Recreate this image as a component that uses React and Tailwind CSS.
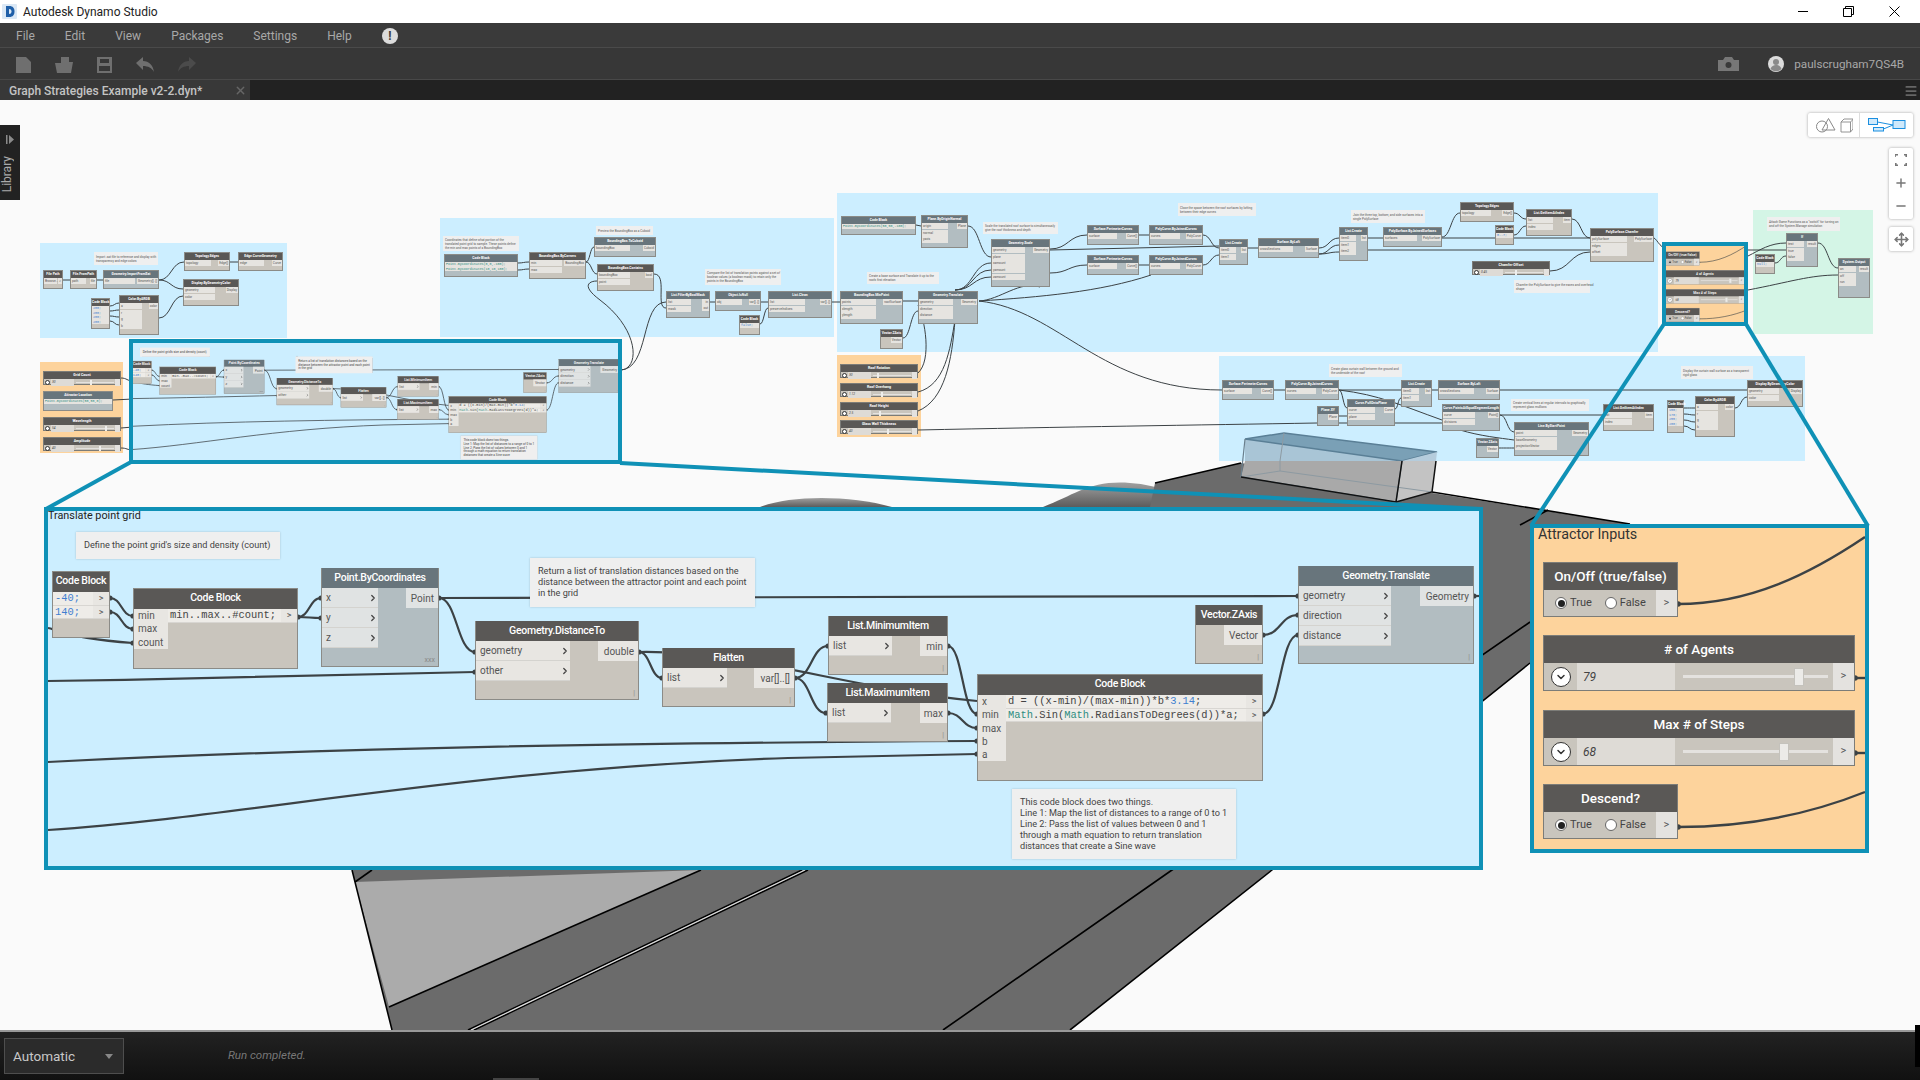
import { ChevronDown, ChevronRight, Menu, Minus, Move, Plus, X } from 'lucide-react';
import clsx from 'clsx';

// Helper for the wires: S curve between two ports
const s = (x1, y1, x2, y2) => {
  const mx = (x1 + x2) / 2;
  return `M${x1} ${y1}C${mx} ${y1} ${mx} ${y2} ${x2} ${y2}`;
};

const WIRE = '#3c4245';

// ---------- big node graph pieces ----------
const BigNode = ({ ox, oy, x, y, w, h, title, slate, lw, rw, inputs = [], outputs = [], foot = '|' }) => (
  <div
    className={clsx('absolute border border-[#8b8b87]', slate ? 'bg-[#b2bdc1]' : 'bg-[#c9c5bd]')}
    style={{ left: x - ox, top: y - oy, width: w, height: h }}
  >
    <div className={clsx('-mt-px flex h-5 items-center justify-center text-[10.5px] font-medium tracking-tight text-white whitespace-nowrap', slate ? 'bg-[#68757c]' : 'bg-[#5a5856]')}>
      {title}
    </div>
    <div className="flex justify-between">
      <div style={{ width: lw }}>
        {inputs.map((t) => (
          <div key={t} className={clsx('flex h-5 items-center justify-between border-b border-[#d4d3cf] pl-1 text-[10px] text-[#555]', slate ? 'bg-[#e0e3e3]' : 'bg-[#e8e6e2]')}>
            {t}
            <ChevronRight size={10} strokeWidth={3} className="text-[#444]" />
          </div>
        ))}
      </div>
      <div style={{ width: rw }}>
        {outputs.map((t) => (
          <div key={t} className={clsx('flex h-5 items-center justify-end pr-1 text-[10px] text-[#555]', slate ? 'bg-[#e0e3e3]' : 'bg-[#e8e6e2]')}>
            {t}
          </div>
        ))}
      </div>
    </div>
    <span className="absolute bottom-[1px] right-[3px] text-[7px] text-[#888]">{foot}</span>
  </div>
);

const CodeNode = ({ ox, oy, x, y, w, h, inputs = [], iw = 0, lines }) => (
  <div className="absolute border border-[#8b8b87] bg-[#c9c5bd]" style={{ left: x - ox, top: y - oy, width: w, height: h }}>
    <div className="flex h-5 items-center justify-center bg-[#5a5856] pb-[2px] text-[10.5px] font-medium tracking-tight text-white">Code Block</div>
    <div className="flex items-start">
      {iw > 0 && (
        <div className="bg-[#e8e6e2]" style={{ width: iw }}>
          {inputs.map((t) => (
            <div key={t} className="h-[13.3px] pl-1 text-[10px] leading-[13.3px] text-[#555]">{t}</div>
          ))}
        </div>
      )}
      <div className="min-w-0 flex-1">
        {lines.map((l, i) => (
          <div key={i} className="flex h-[13.5px] border-b border-[#d8d6d2]">
            <div className="flex-1 whitespace-pre bg-[#eeece8] pl-[2px] font-['Liberation_Mono',monospace] text-[10.4px] leading-[13px] text-[#444]">{l}</div>
            <div className="w-4 bg-[#e8e6e2] text-center text-[9px] leading-[12px] text-[#555]">&gt;</div>
          </div>
        ))}
      </div>
    </div>
  </div>
);

const BigNote = ({ ox, oy, x, y, w, h, lines }) => (
  <div
    className="absolute flex flex-col justify-center bg-[#efefef] px-2 text-[9.15px] leading-[11px] text-[#444] shadow-[0_0_2px_rgba(0,0,0,0.2)] whitespace-nowrap"
    style={{ left: x - ox, top: y - oy, width: w, height: h }}
  >
    {lines.map((l) => <div key={l}>{l}</div>)}
  </div>
);

const TRANSLATE_WIRES = [
  'M4 121C12 122 20 131 89 136',
  s(66, 91, 89, 109),
  s(66, 105, 89, 122),
  s(254, 110, 277, 91),
  s(254, 110, 277, 111),
  'M395 91L1254 89',
  s(395, 91, 431, 145),
  'M4 174C150 172 300 168 431 165',
  s(595, 145, 618, 171),
  'M595 145C700 143 810 183 933 194',
  s(751, 171, 784, 139),
  s(751, 171, 782, 206),
  s(904, 139, 933, 207),
  s(904, 206, 933, 221),
  'M4 255C300 240 600 236 933 234',
  'M4 323C200 310 420 262 744 251L933 247',
  s(1219, 207, 1254, 128),
  s(1219, 128, 1254, 108),
  'M1430 89L1439 89',
];

const TRANSLATE_DOTS = [
  [66, 91], [66, 105], [89, 109], [89, 122], [89, 136], [254, 110], [277, 91], [277, 111], [395, 91], [431, 145], [431, 165],
  [595, 145], [618, 171], [751, 171], [784, 139], [782, 206], [904, 139], [904, 206], [933, 207], [933, 221], [933, 234], [933, 247],
  [1219, 207], [1254, 128], [1219, 128], [1254, 108], [1254, 89], [1430, 89],
];

const Num = ({ children }) => <span className="text-[#3f7fd0]">{children}</span>;
const Cls = ({ children }) => <span className="text-[#2f8d80]">{children}</span>;

const TranslateGrid = ({ title }) => {
  const o = { ox: 44, oy: 507 };
  return (
    <div className="relative h-[363px] w-[1439px] bg-[#cceeff]">
      {title && <div className="absolute left-[4px] top-[2px] text-[10.8px] leading-[14px] text-[#222]">Translate point grid</div>}
      <svg className="absolute left-0 top-0" width="1439" height="363" fill="none" stroke={WIRE} strokeWidth="2.2">
        {TRANSLATE_WIRES.map((d) => <path key={d} d={d} />)}
        {TRANSLATE_DOTS.map(([x, y]) => <circle key={`${x}-${y}`} cx={x} cy={y} r="2.6" fill={WIRE} stroke="none" />)}
      </svg>
      <BigNote {...o} x={76} y={532} w={204} h={27} lines={["Define the point grid's size and density (count)"]} />
      <BigNote {...o} x={530} y={558} w={225} h={49} lines={['Return a list of translation distances based on the', 'distance between the attractor point and each point', 'in the grid']} />
      <CodeNode {...o} x={52} y={571} w={58} h={67} lines={[<Num>-40;</Num>, <Num>140;</Num>]} />
      <CodeNode {...o} x={133} y={588} w={165} h={81} iw={34} inputs={['min', 'max', 'count']} lines={['min..max..#count;']} />
      <BigNode {...o} slate x={321} y={568} w={118} h={99} title="Point.ByCoordinates" lw={56} rw={32} inputs={['x', 'y', 'z']} outputs={['Point']} foot="xxx" />
      <BigNode {...o} x={475} y={621} w={164} h={79} title="Geometry.DistanceTo" lw={94} rw={40} inputs={['geometry', 'other']} outputs={['double']} />
      <BigNode {...o} x={662} y={648} w={133} h={59} title="Flatten" lw={64} rw={40} inputs={['list']} outputs={['var[]..[]']} />
      <BigNode {...o} x={828} y={616} w={120} h={59} title="List.MinimumItem" lw={63} rw={27} inputs={['list']} outputs={['min']} />
      <BigNode {...o} x={827} y={683} w={121} h={59} title="List.MaximumItem" lw={63} rw={27} inputs={['list']} outputs={['max']} />
      <CodeNode
        {...o}
        x={977}
        y={674}
        w={286}
        h={107}
        iw={28}
        inputs={['x', 'min', 'max', 'b', 'a']}
        lines={[
          <>d = ((x-min)/(max-min))*b*<Num>3.14</Num>;</>,
          <><Cls>Math</Cls>.Sin(<Cls>Math</Cls>.RadiansToDegrees(d))*a;</>,
        ]}
      />
      <BigNote {...o} x={1012} y={789} w={224} h={70} lines={['This code block does two things.', 'Line 1: Map the list of distances to a range of 0 to 1', 'Line 2: Pass the list of values between 0 and 1', 'through a math equation to return translation', 'distances that create a Sine wave']} />
      <BigNode {...o} x={1195} y={605} w={68} h={59} title="Vector.ZAxis" lw={0} rw={38} outputs={['Vector']} />
      <BigNode {...o} slate x={1298} y={566} w={176} h={98} title="Geometry.Translate" lw={92} rw={53} inputs={['geometry', 'direction', 'distance']} outputs={['Geometry']} />
    </div>
  );
};

// ---------- attractor inputs ----------
const Radio = ({ on, label }) => (
  <span className="flex items-center gap-[3px] text-[11px] text-[#444]">
    <span className="flex h-[12px] w-[12px] items-center justify-center rounded-full border border-[#666] bg-white">
      {on && <span className="h-[7px] w-[7px] rounded-full bg-[#222]" />}
    </span>
    {label}
  </span>
);

const ToggleNode = ({ y, title }) => (
  <div className="absolute left-[13px] w-[135px] border border-[#7c7c78] bg-[#c9c5bd]" style={{ top: y - 525 }}>
    <div className="flex h-[27px] items-center justify-center bg-[#5a5856] pb-[1px] text-[13.5px] font-medium text-white">{title}</div>
    <div className="flex h-[26px] items-center pl-[11px]">
      <Radio on label="True" />
      <span className="ml-[13px]"><Radio label="False" /></span>
      <span className="ml-auto flex h-full w-[21px] items-center justify-center bg-[#e4e2df] text-[11px] text-[#555]">&gt;</span>
    </div>
  </div>
);

const SliderNode = ({ y, title, value, thumb }) => (
  <div className="absolute left-[13px] w-[312px] border border-[#7c7c78] bg-[#c9c5bd]" style={{ top: y - 525 }}>
    <div className="flex h-[27px] items-center justify-center bg-[#5a5856] pb-[1px] text-[13.5px] font-medium text-white">{title}</div>
    <div className="relative flex h-[27px] items-center">
      <span className="ml-[7px] flex h-[20px] w-[20px] items-center justify-center rounded-full border border-[#333] bg-white">
        <ChevronDown size={12} strokeWidth={3} className="text-[#333]" />
      </span>
      <span className="ml-[6px] flex h-full w-[98px] items-center bg-[#dedbd6] pl-[6px] text-[12px] italic text-[#444]">{value}</span>
      <span className="ml-[8px] h-[3px] w-[145px] bg-[#e4e2df]" />
      <span className="absolute top-[5px] h-[18px] w-[10px] border border-[#c4c2bc] bg-[#ecebe8]" style={{ left: thumb }} />
      <span className="ml-auto flex h-full w-[21px] items-center justify-center bg-[#e4e2df] text-[11px] text-[#555]">&gt;</span>
    </div>
  </div>
);

const AttractorInputs = ({ title }) => (
  <div className="relative h-[329px] w-[339px] bg-[#fdd39c]">
    {title && <div className="absolute left-[8px] top-[1px] text-[14.3px] leading-[18px] text-[#333]">Attractor Inputs</div>}
    <svg className="absolute left-0 top-0" width="339" height="329" fill="none" stroke={WIRE} strokeWidth="2.4">
      <path d="M148 80C220 80 280 50 335 13" />
      <path d="M148 303C220 303 280 290 335 268" />
      <path d="M325 154L336 154" />
      <path d="M325 229L336 229" />
      {[[148, 80], [148, 303], [325, 154], [325, 229]].map(([x, y]) => <circle key={y} cx={x} cy={y} r="2.8" fill={WIRE} stroke="none" />)}
    </svg>
    <ToggleNode y={563} title="On/Off (true/false)" />
    <SliderNode y={636} title="# of Agents" value="79" thumb={250} />
    <SliderNode y={711} title="Max # of Steps" value="68" thumb={235} />
    <ToggleNode y={785} title="Descend?" />
  </div>
);

// ---------- small overview graph ----------
const GROUPS = [
  [40, 243, 287, 338, 'bg-[#cceeff]'],
  [40, 362, 123, 453, 'bg-[#fdd39c]'],
  [440, 218, 834, 337, 'bg-[#cceeff]'],
  [837, 193, 1658, 352, 'bg-[#cceeff]'],
  [837, 355, 921, 437, 'bg-[#fdd39c]'],
  [1219, 356, 1805, 461, 'bg-[#cceeff]'],
  [1753, 210, 1873, 334, 'bg-[#d4f5e6]'],
];

const NOTES = [
  [94, 252, 158, 265, ['Import .sat file to reference and display with', 'transparency and edge colors']],
  [443, 236, 519, 251, ['Coordinates that define what portion of the', 'translated point grid to sample. These points define', 'the min and max points of a BoundingBox']],
  [596, 226, 653, 235, ['Preview the BoundingBox as a Cuboid']],
  [705, 269, 781, 285, ['Compare the list of translation points against a set of', 'boolean values (a boolean mask) to retain only the', 'points in the BoundingBox']],
  [983, 222, 1058, 234, ['Scale the translated roof surface to simultaneously', 'give the roof thickness and depth']],
  [1178, 203, 1256, 216, ['Close the space between the roof surfaces by lofting', 'between their edge curves']],
  [1351, 210, 1425, 223, ['Join the three top, bottom, and side surfaces into a', 'single PolySurface']],
  [867, 272, 939, 284, ['Create a base surface and Translate it up to the', 'roofs first elevation']],
  [1514, 280, 1590, 293, ['Chamfer the PolySurface to give the eaves and overhead', 'shape']],
  [1329, 364, 1402, 377, ['Create glass curtain wall between the ground and', 'the underside of the roof']],
  [1511, 399, 1589, 411, ['Create vertical lines at regular intervals to graphically', 'represent glass mullions']],
  [1681, 366, 1753, 379, ['Display the curtain wall surface as a transparent', 'rigid glass']],
  [1767, 217, 1840, 231, ['Attach Game Functions as a "switch" for turning on', 'and off the System.Manage simulation']],
];

const NODES = [
  { b: [43, 270, 63, 289], t: 'File Path', o: ['>'], i: ['Browse...'], lw: '70%' },
  { b: [70, 270, 97, 289], t: 'File.FromPath', i: ['path'], o: ['file'] },
  { b: [103, 270, 159, 289], t: 'Geometry.ImportFromSat', s: 1, i: ['file'], o: ['Geometry[]..[]'] },
  { b: [184, 252, 230, 271], t: 'Topology.Edges', i: ['topology'], o: ['Edge[]'] },
  { b: [238, 252, 283, 271], t: 'Edge.CurveGeometry', i: ['edge'], o: ['Curve'] },
  { b: [183, 279, 239, 306], t: 'Display.ByGeometryColor', i: ['geometry', 'color'], o: ['Display'] },
  { b: [91, 298, 110, 329], t: 'Code Block', code: ['200;', '200;', '200;', '200;'] },
  { b: [119, 295, 159, 335], t: 'Color.ByARGB', i: ['a', 'r', 'g', 'b'], o: ['color'] },
  { b: [444, 254, 518, 277], t: 'Code Block', s: 1, code: ['Point.ByCoordinates(0,0,-100);', 'Point.ByCoordinates(10,10,100);'] },
  { b: [529, 252, 586, 279], t: 'BoundingBox.ByCorners', i: ['min', 'max'], o: ['BoundingBox'] },
  { b: [594, 237, 656, 257], t: 'BoundingBox.ToCuboid', s: 1, i: ['boundingBox'], o: ['Cuboid'] },
  { b: [597, 264, 654, 291], t: 'BoundingBox.Contains', i: ['boundingBox', 'point'], o: ['bool'] },
  { b: [666, 291, 710, 318], t: 'List.FilterByBoolMask', s: 1, i: ['list', 'mask'], o: ['in', 'out'] },
  { b: [715, 291, 761, 311], t: 'Object.IsNull', s: 1, i: ['obj'], o: ['var[]..[]'] },
  { b: [768, 291, 832, 318], t: 'List.Clean', s: 1, i: ['list', 'preserveIndices'], o: ['var[]..[]'] },
  { b: [739, 315, 760, 335], t: 'Code Block', code: ['false;'] },
  { b: [841, 216, 916, 235], t: 'Code Block', s: 1, code: ['Point.ByCoordinates(50,50,-100);'] },
  { b: [921, 215, 968, 248], t: 'Plane.ByOriginNormal', s: 1, i: ['origin', 'normal', 'yaxis'], o: ['Plane'] },
  { b: [991, 239, 1050, 287], t: 'Geometry.Scale', s: 1, i: ['geometry', 'plane', 'xamount', 'yamount', 'zamount'], o: ['Geometry'] },
  { b: [1087, 225, 1139, 245], t: 'Surface.PerimeterCurves', s: 1, i: ['surface'], o: ['Curve[]'] },
  { b: [1149, 225, 1203, 245], t: 'PolyCurve.ByJoinedCurves', s: 1, i: ['curves'], o: ['PolyCurve'] },
  { b: [1087, 255, 1139, 275], t: 'Surface.PerimeterCurves', s: 1, i: ['surface'], o: ['Curve[]'] },
  { b: [1149, 255, 1203, 275], t: 'PolyCurve.ByJoinedCurves', s: 1, i: ['curves'], o: ['PolyCurve'] },
  { b: [1219, 239, 1248, 265], t: 'List.Create', s: 1, i: ['item0', 'item1'], o: ['list'] },
  { b: [1258, 238, 1319, 258], t: 'Surface.ByLoft', s: 1, i: ['crossSections'], o: ['Surface'] },
  { b: [1339, 227, 1368, 261], t: 'List.Create', s: 1, i: ['item0', 'item1', 'item2'], o: ['list'] },
  { b: [1383, 227, 1442, 247], t: 'PolySurface.ByJoinedSurfaces', s: 1, i: ['surfaces'], o: ['PolySurface'] },
  { b: [1460, 202, 1514, 222], t: 'Topology.Edges', i: ['topology'], o: ['Edge[]'] },
  { b: [1495, 225, 1514, 245], t: 'Code Block', code: ['0..7;'] },
  { b: [1526, 209, 1572, 236], t: 'List.GetItemAtIndex', i: ['list', 'index'], o: ['item'] },
  { b: [1590, 228, 1654, 262], t: 'PolySurface.Chamfer', i: ['polySurface', 'edges', 'offset'], o: ['PolySurface'] },
  { b: [840, 291, 903, 324], t: 'BoundingBox.MinPoint', s: 1, i: ['points', 'xlength', 'ylength'], o: ['roofSurface'] },
  { b: [918, 291, 978, 324], t: 'Geometry.Translate', s: 1, i: ['geometry', 'direction', 'distance'], o: ['Geometry'] },
  { b: [880, 329, 903, 349], t: 'Vector.ZAxis', o: ['Vector'], lw: 0 },
  { b: [1222, 380, 1274, 400], t: 'Surface.PerimeterCurves', s: 1, i: ['surface'], o: ['Curve[]'] },
  { b: [1285, 380, 1339, 400], t: 'PolyCurve.ByJoinedCurves', s: 1, i: ['curves'], o: ['PolyCurve'] },
  { b: [1401, 380, 1432, 407], t: 'List.Create', s: 1, i: ['item0', 'item1'], o: ['list'] },
  { b: [1438, 380, 1500, 400], t: 'Surface.ByLoft', s: 1, i: ['crossSections'], o: ['Surface'] },
  { b: [1347, 399, 1395, 426], t: 'Curve.PullOntoPlane', s: 1, i: ['curve', 'plane'], o: ['Curve'] },
  { b: [1317, 406, 1339, 426], t: 'Plane.XY', s: 1, o: ['Plane'], lw: 0 },
  { b: [1442, 404, 1500, 431], t: 'Curve.PointsAtEqualSegmentLength', s: 1, i: ['curve', 'divisions'], o: ['Point[]'] },
  { b: [1603, 404, 1654, 431], t: 'List.GetItemAtIndex', i: ['list', 'index'], o: ['item'] },
  { b: [1514, 422, 1589, 456], t: 'Line.ByStartPoint', s: 1, i: ['point', 'baseGeometry', 'projectionVector'], o: ['Geometry'] },
  { b: [1476, 438, 1499, 458], t: 'Vector.ZAxis', s: 1, o: ['Vector'], lw: 0 },
  { b: [1667, 400, 1684, 433], t: 'Code Block', code: ['150;', '170;', '255;', '200;'] },
  { b: [1695, 396, 1735, 437], t: 'Color.ByARGB', i: ['a', 'r', 'g', 'b'], o: ['color'] },
  { b: [1747, 380, 1803, 407], t: 'Display.ByGeometryColor', i: ['geometry', 'color'], o: ['Display'] },
  { b: [1786, 233, 1818, 267], t: 'If', s: 1, i: ['test', 'true', 'false'], o: ['result'] },
  { b: [1755, 254, 1775, 274], t: 'Code Block', code: ['null;'] },
  { b: [1838, 258, 1870, 298], t: 'System.Output', s: 1, i: ['on', 'off', 'run'], o: ['result'] },
  { b: [43, 391, 113, 411], t: 'Attractor Location', s: 1, code: ['Point.ByCoordinates(50,50,0);'] },
];

const SLIDERS = [
  [43, 371, 121, 'Grid Count', '30', 0.45],
  [43, 417, 121, 'Wavelength', '54', 0.85],
  [43, 437, 121, 'Amplitude', '40', 0.7],
  [840, 364, 918, 'Roof Rotation', '30', 0.2],
  [840, 383, 918, 'Roof Overhang', '1.12', 0.3],
  [840, 402, 918, 'Roof Height', '2.5', 0.25],
  [840, 420, 918, 'Glass Wall Thickness', '40', 0.45],
  [1472, 261, 1550, 'Chamfer Offset', '0.45', 0.35],
];

const MiniNode = ({ b, t, s: slate, i = [], o = [], code, lw = '58%' }) => (
  <div
    className={clsx('absolute border-[0.5px] border-[#8b8b87]', slate ? 'bg-[#b2bdc1]' : 'bg-[#c9c5bd]')}
    style={{ left: b[0], top: b[1], width: b[2] - b[0], height: b[3] - b[1] }}
  >
    <div className={clsx('h-[7px] whitespace-nowrap text-center text-[3.4px] font-bold leading-[7px] text-white', slate ? 'bg-[#68757c]' : 'bg-[#5a5856]')}>{t}</div>
    {code ? (
      <div className="bg-[#e6e4e0] pl-[1px] font-['Liberation_Mono',monospace] text-[3.3px] leading-[4.6px]">
        {code.map((c, k) => <div key={k} className={clsx('whitespace-nowrap', c.startsWith('Point') ? 'text-[#2f8d80]' : 'text-[#3f7fd0]')}>{c}</div>)}
      </div>
    ) : (
      <div className="flex justify-between">
        <div style={{ width: lw }}>
          {i.map((l) => <div key={l} className="mb-[0.5px] h-[6.2px] bg-[#e6e4e0] pl-[1px] text-[3.2px] leading-[6.2px] text-[#555]">{l}</div>)}
        </div>
        <div className="max-w-[60%]">
          {o.map((l) => <div key={l} className="h-[6.2px] bg-[#e6e4e0] px-[1px] text-right text-[3.2px] leading-[6.2px] text-[#555]">{l}</div>)}
        </div>
      </div>
    )}
  </div>
);

const MiniSlider = ({ x, y, x2, t, v, at }) => (
  <div className="absolute border-[0.5px] border-[#7c7c78] bg-[#c9c5bd]" style={{ left: x, top: y, width: x2 - x, height: 14 }}>
    <div className="h-[7px] text-center text-[3.6px] font-bold leading-[7px] text-white bg-[#5a5856]">{t}</div>
    <div className="relative flex h-[6.5px] items-center">
      <span className="ml-[1px] h-[5px] w-[5px] rounded-full border-[0.5px] border-[#333] bg-white" />
      <span className="ml-[1px] h-full w-[30%] bg-[#dedbd6] pl-[1px] text-[3.2px] italic leading-[6.5px] text-[#444]">{v}</span>
      <span className="ml-[2px] h-[1px] w-[50%] bg-[#e4e2df]" />
      <span className="absolute top-[1px] h-[4.5px] w-[2px] bg-[#eeeeec]" style={{ left: `${38 + at * 50}%` }} />
      <span className="ml-auto h-full w-[5px] bg-[#e4e2df]" />
    </div>
  </div>
);

const MINI_WIRES = [
  'M63 280L70 280', 'M97 280L103 280', s(159, 280, 184, 262), s(159, 280, 183, 289), 'M230 262L238 262', s(159, 318, 183, 296),
  s(110, 306, 119, 303), s(110, 311, 119, 310), s(110, 316, 119, 317), s(110, 321, 119, 325),
  s(121, 378, 133, 381), 'M113 400L133 399', 'M121 428L133 427', s(121, 448, 133, 450),
  s(518, 263, 529, 262), s(518, 270, 529, 269), s(586, 262, 594, 247), s(586, 262, 597, 274),
  'M620 370C640 370 640 330 600 300C580 285 590 281 597 281',
  'M620 370C650 370 640 302 666 302',
  'M654 274C668 274 655 308 666 308',
  'M710 302L715 302', 'M761 302L768 302', 'M832 302L840 302', s(760, 324, 768, 308),
  'M916 225L921 226', s(968, 226, 991, 257), 'M979 301C1000 300 1020 280 1040 287',
  s(1050, 249, 1087, 235), s(1050, 273, 1087, 265), 'M1139 235L1149 235', 'M1139 265L1149 265',
  s(1203, 235, 1219, 248), s(1203, 265, 1219, 255), 'M1248 248L1258 248', s(1319, 248, 1339, 238), s(1319, 254, 1339, 245), s(1319, 254, 1339, 252),
  'M1050 250L1219 246', 'M979 301C1040 297 1100 292 1151 275', 'M1368 238L1383 238', s(1442, 237, 1460, 213), s(1514, 213, 1526, 219), s(1514, 235, 1526, 226),
  s(1572, 219, 1590, 238), 'M1442 238L1590 238', 'M1368 250L1590 250', s(1550, 271, 1590, 252),
  'M903 301L918 301', s(903, 338, 918, 311), 'M918 373C932 360 925 320 918 305', 'M918 392C945 385 950 350 955 320', 'M918 411C945 400 952 360 955 320',
  s(955, 290, 991, 263), s(955, 290, 991, 270), s(955, 290, 991, 277), 'M979 301C1060 310 1100 390 1222 390',
  'M918 430C1060 427 1200 425 1317 423', 'M1274 390L1285 390', 'M1339 390L1401 390', s(1339, 390, 1347, 408), 'M1339 416L1347 416', 'M1339 390C1380 395 1400 405 1442 420', 'M1339 423L1442 423',
  s(1395, 409, 1401, 398), 'M1432 390L1438 390', 'M1500 390L1747 390', s(1500, 415, 1514, 432), 'M1500 415L1603 415', s(1499, 448, 1514, 448), 'M1460 430C1480 436 1500 438 1514 440',
  s(1684, 408, 1695, 408), s(1684, 414, 1695, 415), s(1684, 420, 1695, 422), s(1684, 426, 1695, 430), s(1735, 408, 1747, 397),
  'M1654 238C1658 240 1660 250 1672 250L1786 250', 'M1748 256C1760 250 1770 243 1786 243', s(1775, 263, 1786, 256), s(1818, 243, 1838, 268), 'M1748 290C1790 282 1810 275 1838 275',
];

// ---------- 3d geometry behind the graph ----------
const Geometry = () => (
  <svg className="absolute left-0 top-0" width="1920" height="1080" fill="none">
    <defs>
      <linearGradient id="hill" x1="0" y1="0" x2="0" y2="1">
        <stop offset="0" stopColor="#a0a0a0" />
        <stop offset="1" stopColor="#5c5c5c" />
      </linearGradient>
    </defs>
    <path d="M760 507C790 495 850 495 892 507Z" fill="url(#hill)" />
    <path d="M1043 507C1075 495 1090 480 1130 483C1160 485 1180 495 1200 507Z" fill="url(#hill)" />
    <polygon points="392,1030 352,870 352,700 1150,507 1155,483 1241,463 1630,524 1700,540 1530,663 1272,870 1070,1030" fill="#6b6b6b" />
    <polygon points="355,882 701,870 389,1007" fill="#ababab" />
    <g stroke="#000" strokeWidth="1.6">
      <path d="M352 870L392 1030" />
      <path d="M355 882L372 870" />
      <path d="M701 870L389 1007" />
      <path d="M1530 663L1272 870L1070 1030" />
      <path d="M1530 622L1172 870L943 1030" />
      <path d="M1548 510L1520 525" />
      <path d="M1155 483L1241 463" />
      <path d="M1432 492L1630 524" />
      <path d="M808 870L474 1030" />
      <path d="M802 870L468 1030" />
    </g>
    <path d="M805 870L471 1030" stroke="#ddd" strokeWidth="1.2" />
  </svg>
);

const GlassBox = () => (
  <svg className="absolute left-0 top-0" width="1920" height="1080" fill="none">
    <polygon points="1245,439 1402,461 1401,461 1245,461" fill="#a9c5d6" />
    <polygon points="1245,439 1284,433 1437,452 1402,461" fill="#7aa0b6" stroke="#5a7f96" strokeWidth="1.5" />
    <polygon points="1402,461 1437,452 1436,461 1402,461" fill="#b5ccdc" />
    <polygon points="1245,461 1402,461 1396,502 1241,477" fill="#a9a9a9" />
    <polygon points="1402,461 1436,461 1432,492 1396,502" fill="#c3c3c3" />
    <path d="M1284 433L1280 461L1280 471L1432 492M1280 471L1241 477" stroke="#8d9aa2" strokeWidth="1" />
    <path d="M1245 439L1241 477L1396 502L1402 461" stroke="#6a7f8d" strokeWidth="1.2" />
    <path d="M1241 477L1396 502L1402 461M1396 502L1432 492L1436 461" stroke="#111" strokeWidth="1.5" />
  </svg>
);

const ToolIcon = ({ className, children, w = 18 }) => (
  <svg width={w} height="16" viewBox={`0 0 ${w} 16`} className={className} fill="currentColor">{children}</svg>
);

export default function App() {
  return (
    <div className="flex h-[1080px] w-[1920px] flex-col overflow-hidden font-[Roboto,sans-serif]">
      {/* Title bar */}
      <div className="flex h-[23px] shrink-0 items-center bg-white">
        <svg width="15" height="15" viewBox="0 0 15 15" className="ml-[2px]">
          <rect width="15" height="15" rx="1" fill="#dbe8f5" />
          <path d="M4 2h3.5c3.2 0 5 2.2 5 5.5S10.700 13 7.500 13H4z" fill="#1f5fa8" />
          <path d="M7 5v5c1.500 0 2.500-.8 2.500-2.500S8.500 5 7 5z" fill="#dbe8f5" />
        </svg>
        <span className="ml-[6px] text-[12px] text-[#222]">Autodesk Dynamo Studio</span>
        <div className="ml-auto flex items-center gap-[35px] pr-[20px]">
          <span className="h-[1px] w-[10px] bg-black" />
          <svg width="11" height="11" viewBox="0 0 11 11" fill="none" stroke="#000"><path d="M.5 2.500h8v8h-8zM2.500 2.500v-2h8v8h-2" /></svg>
          <svg width="11" height="11" viewBox="0 0 11 11" stroke="#000"><path d="M.5.5l10 10M10.500.5l-10 10" /></svg>
        </div>
      </div>

      {/* Menu bar */}
      <div className="flex h-[25px] shrink-0 items-center gap-[30px] border-b border-[#4a4a4a] bg-[#3a3a3a] pl-4 pt-px text-[12px] text-[#a8a8a8]">
        <span>File</span>
        <span>Edit</span>
        <span>View</span>
        <span>Packages</span>
        <span>Settings</span>
        <span>Help</span>
        <span className="flex h-[16px] w-[16px] items-center justify-center rounded-full bg-[#dcdcdc] text-[12px] font-bold leading-none text-[#3a3a3a]">!</span>
      </div>

      {/* Toolbar */}
      <div className="flex h-[32px] shrink-0 items-center justify-between border-b border-[#484848] bg-[#373737] pl-4 pr-4 pt-[2px]">
        <div className="flex items-center gap-[24px] text-[#6f6f6f]">
          <ToolIcon w={15}><path d="M0 0h10l5 5v11H0z" /></ToolIcon>
          <ToolIcon><path d="M6 0h8v5h4l-2 11H2L0 6h6z" /></ToolIcon>
          <ToolIcon w={15}><path fillRule="evenodd" d="M0 0h15v16H0zM3 2v4h9V2zM2 9v5h11V9z" /></ToolIcon>
          <ToolIcon><path d="M0 6L7 0v4c6 0 10 4 11 11-2-4-6-6-11-6v4z" /></ToolIcon>
          <ToolIcon className="text-[#4b4b4b]"><path d="M18 6L11 0v4C5 4 1 8 0 15c2-4 6-6 11-6v4z" /></ToolIcon>
        </div>
        <div className="flex items-center">
          <svg width="21" height="14" viewBox="0 0 21 14">
            <path d="M0 3h5l2-3h7l2 3h5v11H0z" fill="#777" />
            <circle cx="10.500" cy="8" r="3" fill="#3a3a3a" />
          </svg>
          <svg width="16" height="16" viewBox="0 0 16 16" className="ml-[29px]">
            <circle cx="8" cy="8" r="8" fill="#dcdcdc" />
            <circle cx="8" cy="6" r="3" fill="#8a8a8a" />
            <path d="M2.500 13c1-3 3-4 5.500-4s4.500 1 5.500 4a8 8 0 0 1-11 0z" fill="#8a8a8a" />
          </svg>
          <span className="ml-[10px] text-[11.7px] text-[#a8a8a8]">paulscrugham7QS4B</span>
        </div>
      </div>

      {/* Tab bar */}
      <div className="flex h-[20px] shrink-0 items-center justify-between bg-[#222222]">
        <div className="flex h-full w-[250px] items-center justify-between bg-[#383838] pl-[9px] pr-[3px] pt-px text-[12px] font-medium text-[#c4c4c4]">
          Graph Strategies Example v2-2.dyn*
          <X size={13} strokeWidth={2.5} className="text-[#666]" />
        </div>
        <Menu size={14} strokeWidth={3} className="mr-[2px] mt-px text-[#666]" />
      </div>

      {/* Canvas: free layer, children use page coordinates */}
      <div className="relative min-h-0 flex-1 overflow-hidden bg-[#fafafa]">
        <div className="absolute left-0 top-[-100px] h-[1080px] w-[1920px]">
          <Geometry />

          {GROUPS.map(([x, y, x2, y2, c]) => (
            <div key={`${x}-${y}`} className={clsx('absolute', c)} style={{ left: x, top: y, width: x2 - x, height: y2 - y }} />
          ))}

          <svg className="absolute left-0 top-0" width="1920" height="1080" fill="none" stroke={WIRE} strokeWidth="1">
            {MINI_WIRES.map((d) => <path key={d} d={d} />)}
          </svg>

          {NOTES.map(([x, y, x2, y2, lines]) => (
            <div
              key={`${x}-${y}`}
              className="absolute flex flex-col justify-center whitespace-nowrap bg-[#efefef] px-[2px] text-[3.1px] leading-[4px] text-[#555]"
              style={{ left: x, top: y, width: x2 - x, height: y2 - y }}
            >
              {lines.map((l) => <div key={l}>{l}</div>)}
            </div>
          ))}
          {NODES.map((n) => <MiniNode key={`${n.t}-${n.b[0]}-${n.b[1]}`} {...n} />)}
          {SLIDERS.map(([x, y, x2, t, v, at]) => <MiniSlider key={t} x={x} y={y} x2={x2} t={t} v={v} at={at} />)}

          <GlassBox />

          {/* small frames */}
          <div className="absolute left-[129px] top-[339px] h-[125px] w-[493px] overflow-hidden">
            <div className="origin-top-left scale-[0.3426]"><TranslateGrid /></div>
            <div className="absolute inset-0 border-4 border-[#0f91b6]" />
          </div>
          <div className="absolute left-[1662px] top-[242px] h-[84px] w-[86px] overflow-hidden">
            <div className="origin-top-left scale-[0.2537]"><AttractorInputs /></div>
            <div className="absolute inset-0 border-4 border-[#0f91b6]" />
          </div>

          {/* leader lines */}
          <svg className="absolute left-0 top-0" width="1920" height="1080" stroke="#0f91b6" strokeWidth="4">
            <path d="M131 462L46 509" />
            <path d="M620 463L1481 509" />
            <path d="M1664 324L1531 526" />
            <path d="M1746 324L1868 526" />
          </svg>

          {/* large frames */}
          <div className="absolute left-[44px] top-[507px] h-[363px] w-[1439px] overflow-hidden">
            <TranslateGrid title />
            <div className="absolute inset-0 border-[4px] border-[#0f91b6]" />
          </div>
          <div className="absolute left-[1530px] top-[524px] h-[329px] w-[339px] overflow-hidden">
            <AttractorInputs title />
            <div className="absolute inset-0 border-[4px] border-[#0f91b6]" />
          </div>

          {/* Library tab */}
          <div className="absolute left-0 top-[125px] flex h-[75px] w-[20px] flex-col items-start bg-[#222222] pt-[10px] text-[#8a8a8a]">
            <svg width="8" height="9" viewBox="0 0 8 9" fill="currentColor" className="ml-[6px]"><path d="M0 0h1.500v9H0zM3 0l5 4.500L3 9z" /></svg>
            <span className="mt-[12px] rotate-180 text-[12px] leading-[14px] text-[#aaa] [writing-mode:vertical-rl]">Library</span>
          </div>

          {/* View toggle */}
          <div className="absolute left-[1808px] top-[113px] flex h-[24px] w-[105px] rounded-[2px] bg-white shadow-[0_0_3px_rgba(0,0,0,0.35)]">
            <div className="flex w-[52px] items-center justify-center border-r border-[#ddd]">
              <svg width="38" height="16" viewBox="0 0 38 16" fill="none" stroke="#888">
                <circle cx="7" cy="9.500" r="5.500" />
                <path d="M7 13L13.500 1.500L20 13z" />
                <path d="M26 5h9.500v10H26zM26 5l3-3h9.500L35.500 5M38 2v10l-2.500 3" strokeWidth="0.9" />
              </svg>
            </div>
            <div className="flex flex-1 items-center justify-center">
              <svg width="38" height="15" viewBox="0 0 38 15" fill="#cfe9fb" stroke="#1b8fe0">
                <rect x="0.500" y="0.500" width="9" height="6" />
                <rect x="5.500" y="9.500" width="10" height="3.500" />
                <rect x="25" y="2.500" width="12" height="8" />
                <path d="M9.500 4L25 7M15.500 11L25 7" fill="none" />
              </svg>
            </div>
          </div>

          {/* Zoom controls */}
          <div className="absolute left-[1889px] top-[148px] flex h-[71px] w-[24px] flex-col items-center justify-between rounded-[2px] bg-white py-[6px] text-[#777] shadow-[0_0_3px_rgba(0,0,0,0.35)]">
            <svg width="12" height="12" viewBox="0 0 12 12" fill="none" stroke="#777" strokeWidth="1.6">
              <path d="M0 3V.8H3M9 .8h2.200V3M11.200 9v2.200H9M3 11.200H.8V9" />
            </svg>
            <Plus size={14} strokeWidth={2.5} />
            <Minus size={14} strokeWidth={2.5} />
          </div>
          <div className="absolute left-[1889px] top-[227px] flex h-[24px] w-[24px] items-center justify-center rounded-[2px] bg-white text-[#777] shadow-[0_0_3px_rgba(0,0,0,0.35)]">
            <Move size={15} strokeWidth={2.5} />
          </div>
        </div>
      </div>

      {/* Status bar */}
      <div className="relative flex h-[50px] shrink-0 items-center border-t-2 border-[#999] bg-gradient-to-b from-[#222222] to-[#111111] pl-1">
        <div className="flex h-[36px] w-[120px] items-center justify-between border border-[#4e4e4e] bg-[#2b2b2b] pl-2 pr-[10px] text-[13.5px] text-[#c8c8c8]">
          Automatic
          <span className="h-0 w-0 border-x-[4px] border-t-[5px] border-x-transparent border-t-[#888]" />
        </div>
        <span className="ml-[104px] text-[11.5px] italic text-[#777]">Run completed.</span>
        <div className="absolute bottom-0 left-[493px] h-[2px] w-[46px] bg-[#444]" />
        <div className="absolute right-0 top-[-7px] h-[42px] w-[5px] bg-black" />
      </div>
    </div>
  );
}
